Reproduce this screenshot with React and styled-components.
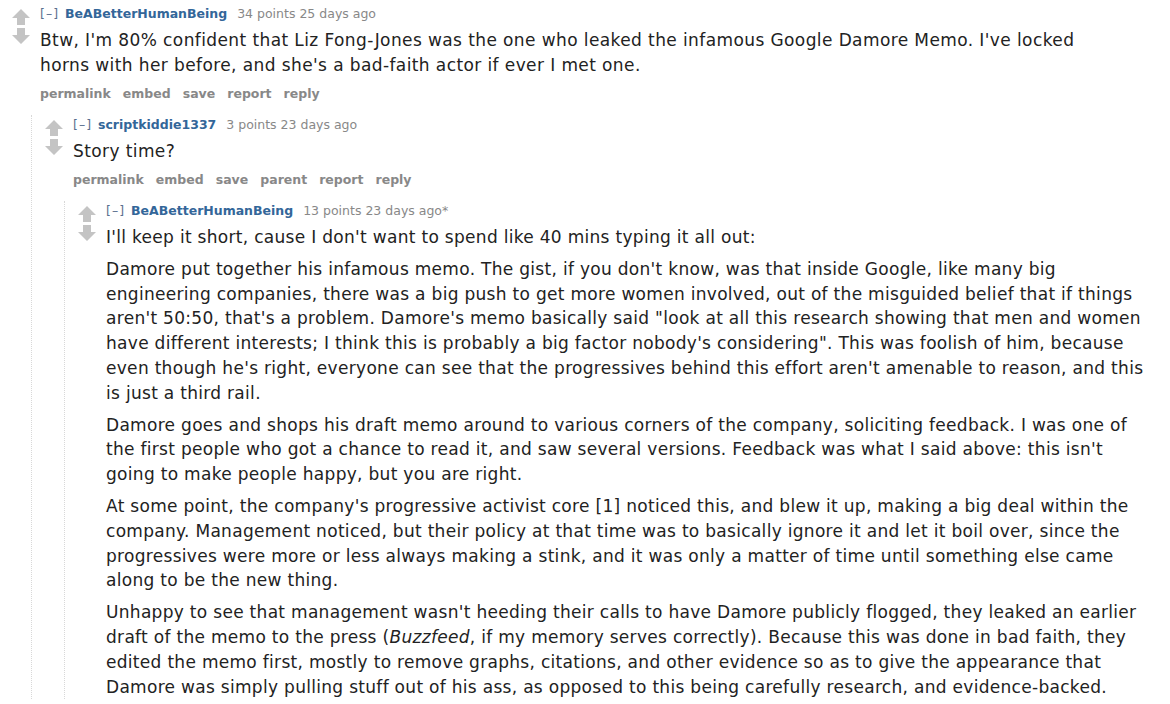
import React from 'react'
import styled, { createGlobalStyle } from 'styled-components'

const GlobalStyle = createGlobalStyle`
  html, body {
    margin: 0;
    padding: 0;
    background: #fff;
  }
  body {
    font-family: "DejaVu Sans", Verdana, sans-serif;
  }
`

const Page = styled.div`
  width: 1170px;
  height: 704px;
  overflow: hidden;
  padding: 4px 0 0 8px;
  box-sizing: border-box;
`

const Comment = styled.div`
  display: flex;
  flex-direction: column;
`

const Row = styled.div`
  display: flex;
  align-items: flex-start;
`

const Midcol = styled.div`
  width: 32px;
  flex: none;
  display: flex;
  flex-direction: column;
  gap: 3px;
  padding: 5px 0 0 4px;
  box-sizing: border-box;
  svg {
    display: block;
  }
`

const Entry = styled.div`
  display: flex;
  flex-direction: column;
`

const Tagline = styled.div`
  display: flex;
  align-items: baseline;
  font-size: 12.5px;
  line-height: 20px;
  color: #888;
  white-space: nowrap;
`

const Expand = styled.span`
  color: #5a6f8e;
  letter-spacing: 1px;
  margin-right: 6px;
`

const Author = styled.span`
  color: #369;
  font-weight: bold;
  margin-right: 10px;
`

const Body = styled.div`
  margin-top: 4px;
  color: #222;
  font-size: 17px;
  letter-spacing: ${p => p.$track || 0.4}px;
  line-height: ${p => p.$lh || 25}px;
  white-space: nowrap;
  p {
    margin: 0;
  }
  p + p {
    margin-top: 7px;
  }
  em {
    font-style: italic;
  }
`

const Buttons = styled.ul`
  list-style: none;
  display: flex;
  gap: 12px;
  margin: 6px 0 0;
  padding: 0;
  li {
    font-size: 12.5px;
    line-height: 20px;
    font-weight: bold;
    color: #888;
  }
`

const Child = styled.div`
  margin: 11px 0 0 23px;
  padding-left: 9px;
  border-left: 1px dotted #d8d8d8;
`

const Arrow = ({ down }) => (
  <svg width="18" height="16" viewBox="0 0 18 16">
    <polygon
      points="9,0 18,9 13,9 13,16 5,16 5,9 0,9"
      fill="#c4c4c4"
      transform={down ? 'rotate(180 9 8)' : undefined}
    />
  </svg>
)

const Votes = () => (
  <Midcol>
    <Arrow />
    <Arrow down />
  </Midcol>
)

const Meta = ({ author, score, age }) => (
  <Tagline>
    <Expand>[–]</Expand>
    <Author>{author}</Author>
    <span>{score} points {age}</span>
  </Tagline>
)

const ButtonList = ({ items }) => (
  <Buttons>
    {items.map(b => <li key={b}>{b}</li>)}
  </Buttons>
)

export default function App() {
  return (
    <>
      <GlobalStyle />
      <Page>
        <Comment>
          <Row>
            <Votes />
            <Entry>
              <Meta author="BeABetterHumanBeing" score="34" age="25 days ago" />
              <Body $track={0.4}>
                <p>
                  Btw, I'm 80% confident that Liz Fong-Jones was the one who leaked the infamous Google Damore Memo. I've locked<br />
                  horns with her before, and she's a bad-faith actor if ever I met one.
                </p>
              </Body>
              <ButtonList items={['permalink', 'embed', 'save', 'report', 'reply']} />
            </Entry>
          </Row>
          <Child>
            <Comment>
              <Row>
                <Votes />
                <Entry>
                  <Meta author="scriptkiddie1337" score="3" age="23 days ago" />
                  <Body $track={0.4}>
                    <p>Story time?</p>
                  </Body>
                  <ButtonList items={['permalink', 'embed', 'save', 'parent', 'report', 'reply']} />
                </Entry>
              </Row>
              <Child>
                <Comment>
                  <Row>
                    <Votes />
                    <Entry>
                      <Meta author="BeABetterHumanBeing" score="13" age="23 days ago*" />
                      <Body $track={0.3} $lh={24.8}>
                        <p>I'll keep it short, cause I don't want to spend like 40 mins typing it all out:</p>
                        <p>
                          Damore put together his infamous memo. The gist, if you don't know, was that inside Google, like many big<br />
                          engineering companies, there was a big push to get more women involved, out of the misguided belief that if things<br />
                          aren't 50:50, that's a problem. Damore's memo basically said "look at all this research showing that men and women<br />
                          have different interests; I think this is probably a big factor nobody's considering". This was foolish of him, because<br />
                          even though he's right, everyone can see that the progressives behind this effort aren't amenable to reason, and this<br />
                          is just a third rail.
                        </p>
                        <p>
                          Damore goes and shops his draft memo around to various corners of the company, soliciting feedback. I was one of<br />
                          the first people who got a chance to read it, and saw several versions. Feedback was what I said above: this isn't<br />
                          going to make people happy, but you are right.
                        </p>
                        <p>
                          At some point, the company's progressive activist core [1] noticed this, and blew it up, making a big deal within the<br />
                          company. Management noticed, but their policy at that time was to basically ignore it and let it boil over, since the<br />
                          progressives were more or less always making a stink, and it was only a matter of time until something else came<br />
                          along to be the new thing.
                        </p>
                        <p>
                          Unhappy to see that management wasn't heeding their calls to have Damore publicly flogged, they leaked an earlier<br />
                          draft of the memo to the press (<em>Buzzfeed</em>, if my memory serves correctly). Because this was done in bad faith, they<br />
                          edited the memo first, mostly to remove graphs, citations, and other evidence so as to give the appearance that<br />
                          Damore was simply pulling stuff out of his ass, as opposed to this being carefully research, and evidence-backed.
                        </p>
                      </Body>
                    </Entry>
                  </Row>
                </Comment>
              </Child>
            </Comment>
          </Child>
        </Comment>
      </Page>
    </>
  )
}
